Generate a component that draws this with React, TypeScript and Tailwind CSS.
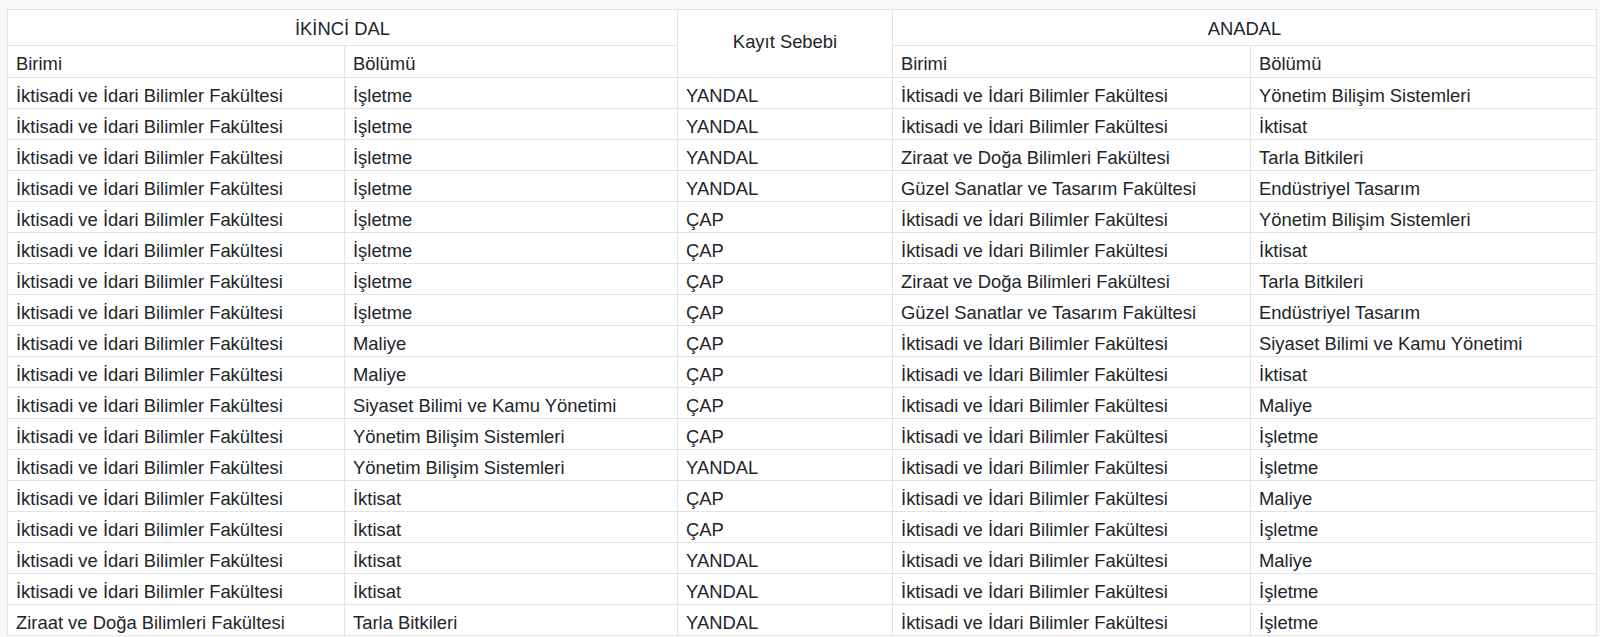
import React from "react";

const IIBF = "İktisadi ve İdari Bilimler Fakültesi";
const ZDBF = "Ziraat ve Doğa Bilimleri Fakültesi";
const GSTF = "Güzel Sanatlar ve Tasarım Fakültesi";

const rows: [string, string, string, string, string][] = [
  [IIBF, "İşletme", "YANDAL", IIBF, "Yönetim Bilişim Sistemleri"],
  [IIBF, "İşletme", "YANDAL", IIBF, "İktisat"],
  [IIBF, "İşletme", "YANDAL", ZDBF, "Tarla Bitkileri"],
  [IIBF, "İşletme", "YANDAL", GSTF, "Endüstriyel Tasarım"],
  [IIBF, "İşletme", "ÇAP", IIBF, "Yönetim Bilişim Sistemleri"],
  [IIBF, "İşletme", "ÇAP", IIBF, "İktisat"],
  [IIBF, "İşletme", "ÇAP", ZDBF, "Tarla Bitkileri"],
  [IIBF, "İşletme", "ÇAP", GSTF, "Endüstriyel Tasarım"],
  [IIBF, "Maliye", "ÇAP", IIBF, "Siyaset Bilimi ve Kamu Yönetimi"],
  [IIBF, "Maliye", "ÇAP", IIBF, "İktisat"],
  [IIBF, "Siyaset Bilimi ve Kamu Yönetimi", "ÇAP", IIBF, "Maliye"],
  [IIBF, "Yönetim Bilişim Sistemleri", "ÇAP", IIBF, "İşletme"],
  [IIBF, "Yönetim Bilişim Sistemleri", "YANDAL", IIBF, "İşletme"],
  [IIBF, "İktisat", "ÇAP", IIBF, "Maliye"],
  [IIBF, "İktisat", "ÇAP", IIBF, "İşletme"],
  [IIBF, "İktisat", "YANDAL", IIBF, "Maliye"],
  [IIBF, "İktisat", "YANDAL", IIBF, "İşletme"],
  [ZDBF, "Tarla Bitkileri", "YANDAL", IIBF, "İşletme"],
];

export default function App() {
  return (
    <div
      className="w-[1600px] h-[637px] overflow-hidden bg-[#faf8f6] text-[#212529]"
      style={{ fontFamily: '"Liberation Sans", Arial, sans-serif' }}
    >
      <div className="pt-[9px] pl-[7px] pr-[4px]">
        <table className="w-[1589px] table-fixed border-collapse bg-white text-[18.4px] leading-[22px]">
          <colgroup>
            <col className="w-[337px]" />
            <col className="w-[333px]" />
            <col className="w-[215px]" />
            <col className="w-[358px]" />
            <col className="w-[346px]" />
          </colgroup>
          <thead>
            <tr className="h-[36px]">
              <th
                colSpan={2}
                className="border border-[#e3e3e3] font-normal text-center align-middle px-2 pt-[3px] pb-0"
              >
                İKİNCİ DAL
              </th>
              <th
                rowSpan={2}
                className="border border-[#e3e3e3] font-normal text-center align-middle px-2 pt-0 pb-[4px]"
              >
                Kayıt Sebebi
              </th>
              <th
                colSpan={2}
                className="border border-[#e3e3e3] font-normal text-center align-middle px-2 pt-[3px] pb-0"
              >
                ANADAL
              </th>
            </tr>
            <tr className="h-[32px]">
              <th className="border border-[#e3e3e3] font-normal text-left align-bottom px-2 pt-0 pb-[2px]">
                Birimi
              </th>
              <th className="border border-[#e3e3e3] font-normal text-left align-bottom px-2 pt-0 pb-[2px]">
                Bölümü
              </th>
              <th className="border border-[#e3e3e3] font-normal text-left align-bottom px-2 pt-0 pb-[2px]">
                Birimi
              </th>
              <th className="border border-[#e3e3e3] font-normal text-left align-bottom px-2 pt-0 pb-[2px]">
                Bölümü
              </th>
            </tr>
          </thead>
          <tbody>
            {rows.map((r, i) => (
              <tr key={i} className="h-[31px]">
                {r.map((c, j) => (
                  <td
                    key={j}
                    className="border border-[#e3e3e3] px-2 pt-0 pb-0 leading-[24px] align-bottom whitespace-nowrap"
                  >
                    {c}
                  </td>
                ))}
              </tr>
            ))}
          </tbody>
        </table>
      </div>
    </div>
  );
}
